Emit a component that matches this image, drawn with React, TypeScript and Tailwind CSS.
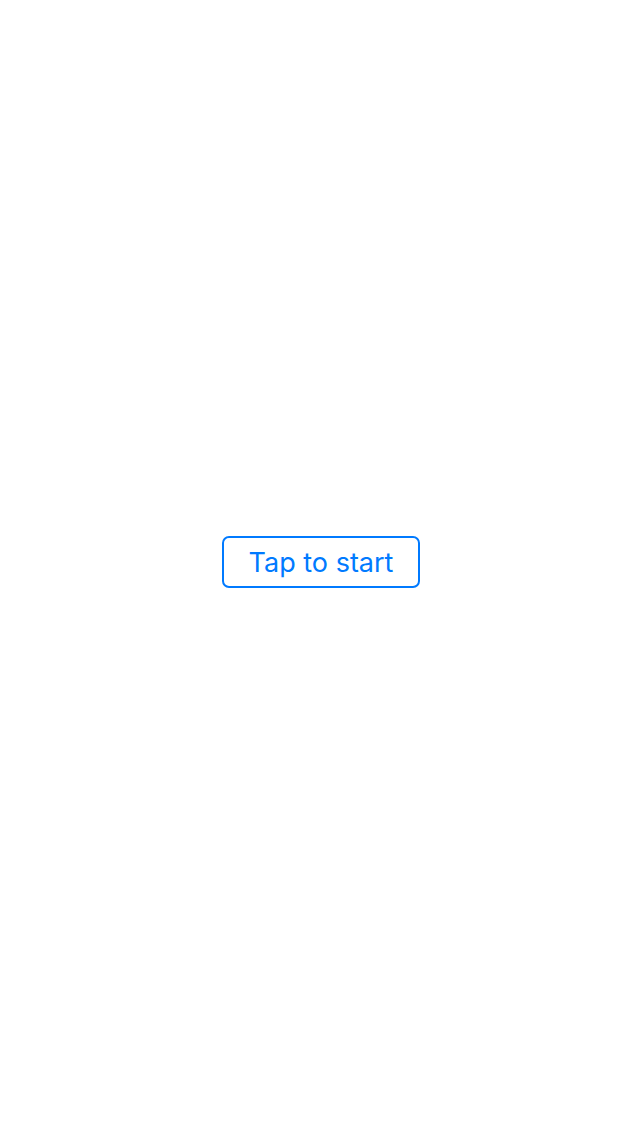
import React, { ReactElement } from "react";

function App(): ReactElement {
  return (
    <div className="w-[640px] h-[1136px] bg-white flex items-center justify-center pb-[12px] pl-[2px]">
      <button
        type="button"
        className="w-[198px] h-[52px] flex items-center justify-center border-2 border-[#007aff] rounded-[7px] text-[#007aff] text-[27px] leading-none"
        style={{ fontFamily: "Inter, 'Noto Sans', sans-serif" }}
      >
        Tap to start
      </button>
    </div>
  );
}

export default App;
